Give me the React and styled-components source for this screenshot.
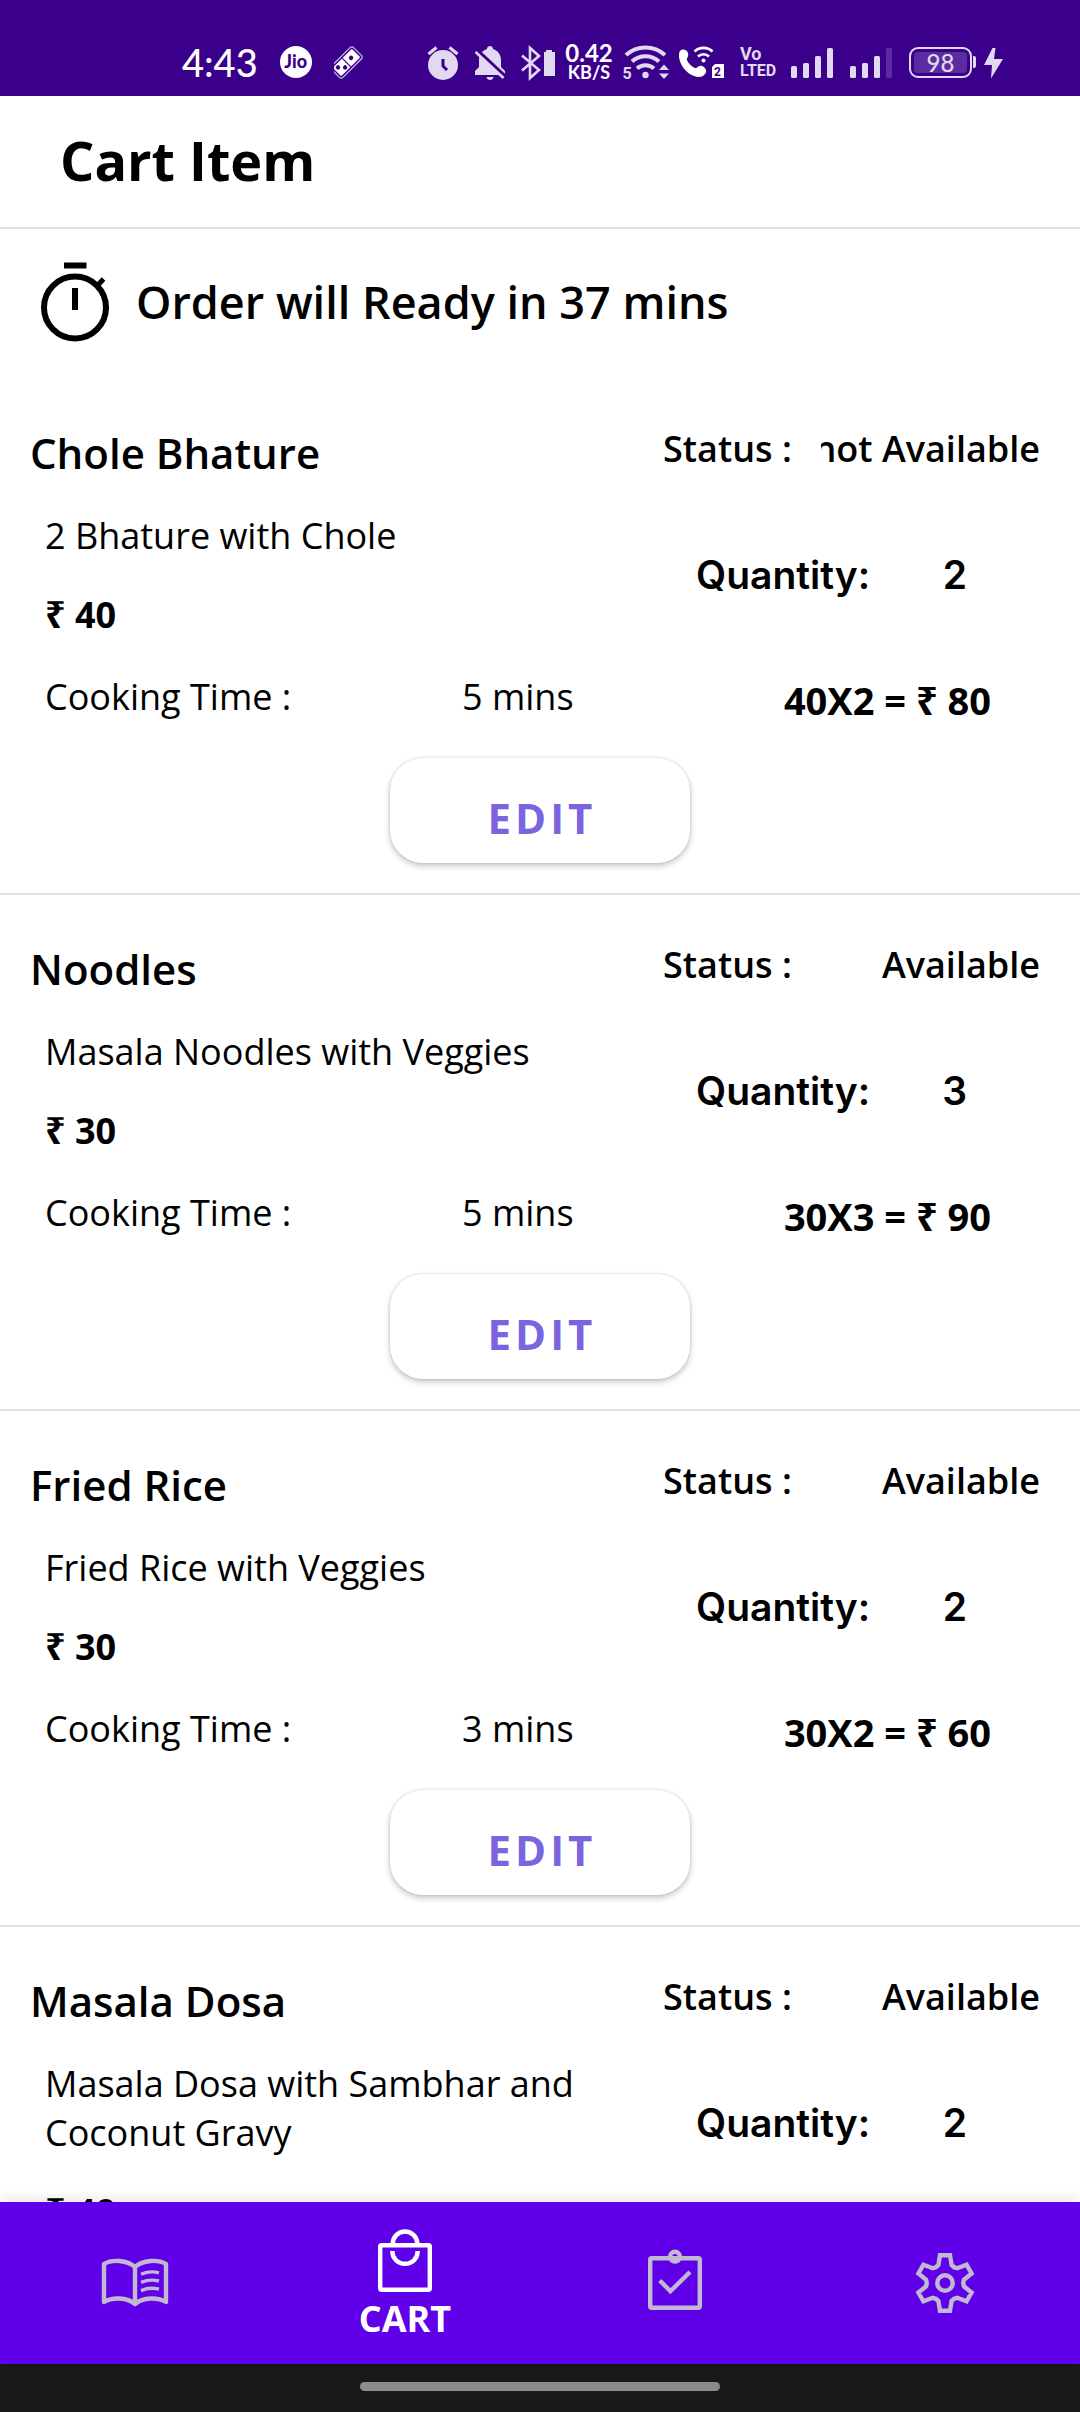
import React from "react";
import styled, { createGlobalStyle } from "styled-components";

const GlobalStyle = createGlobalStyle`
  * { box-sizing: border-box; }
  body {
    margin: 0;
    background: #ffffff;
    color: #000000;
    font-family: "Open Sans", "Noto Sans", sans-serif;
  }
  h1, h2, p { margin: 0; }
`;

const Screen = styled.div`
  display: flex;
  flex-direction: column;
  height: 100vh;
  overflow: hidden;
`;

/* ---------- system status bar ---------- */

const StatusBar = styled.div`
  display: flex;
  flex: none;
  justify-content: space-between;
  padding: 40px 77px 12px 182px;
  background: #3b008b;
  color: #ffffff;
`;

const StatusGroup = styled.div`
  display: flex;
  align-items: center;
  height: 44px;
  gap: ${(p) => p.$gap}px;
`;

const Clock = styled.time`
  font: 500 38px/44px Lato, sans-serif;
`;

const Carrier = styled.span`
  width: 32px;
  height: 32px;
  border-radius: 50%;
  background: #ffffff;
  color: #3b008b;
  font: 900 18px/31px Lato, sans-serif;
  text-align: center;
`;

const StatusSvg = styled.svg`
  display: block;
  flex: none;
  color: #e2d9f0;
`;

const Speed = styled.span`
  display: flex;
  flex-direction: column;
  align-items: center;
  width: 50px;
  font: 700 24px/20px Lato, sans-serif;
`;

const SpeedUnit = styled.span`
  font-size: 18px;
  line-height: 18px;
`;

const Volte = styled.span`
  display: flex;
  flex-direction: column;
  width: 35px;
  color: #e2d9f0;
  font: 700 18px/17px Roboto, sans-serif;
`;

const VolteBand = styled.span`
  font-size: 16px;
`;

const Battery = styled.span`
  display: flex;
  align-items: center;
  width: 67px;

  &::after {
    content: "";
    width: 3px;
    height: 12px;
    margin-left: 1px;
    border-radius: 0 2px 2px 0;
    background: #e2d9f0;
  }
`;

const BatteryLevel = styled.span`
  flex: 1;
  height: 31px;
  border: 2px solid #e2d9f0;
  border-radius: 9px;
  background: #5a2c9f;
  box-shadow: inset 0 0 0 3px #3b008b;
  color: #e2d9f0;
  font: 500 24px/27px Lato, sans-serif;
  text-align: center;
`;

/* ---------- page ---------- */

const Header = styled.header`
  flex: none;
  padding: 27px 60px 30px;
  border-bottom: 2px solid #e2e2e2;
`;

const Title = styled.h1`
  font-size: 54px;
  line-height: 74px;
  font-weight: 700;
`;

const Content = styled.main`
  flex: 1;
  min-height: 0;
  overflow: hidden;
`;

const ReadyBanner = styled.section`
  display: flex;
  align-items: center;
  gap: 26px;
  padding: 32px 40px 34px;
`;

const ReadyText = styled.p`
  padding-bottom: 4px;
  font-size: 45px;
  line-height: 61px;
  font-weight: 600;
`;

const CartRow = styled.article`
  display: grid;
  grid-template-columns: 1fr 377px;
  padding: 45px 40px 30px 30px;
  border-bottom: 2px solid #e2e2e2;
  font-size: 36px;
  line-height: 49px;
`;

const DishName = styled.h2`
  font-size: 42px;
  line-height: 58px;
  font-weight: 600;
`;

const DishInfo = styled.div`
  display: flex;
  flex-direction: column;
  gap: 30px;
  padding: 29px 20px 0 15px;
`;

const Price = styled.p`
  font-weight: 700;
`;

const CookingTime = styled.div`
  display: grid;
  grid-template-columns: 417px auto;
  padding-top: 3px;
`;

const OrderInfo = styled.div`
  display: flex;
  flex-direction: column;
  gap: 77px;
`;

const StatusLine = styled.div`
  display: flex;
  justify-content: space-between;
  font-weight: 600;
  white-space: nowrap;
`;

const StatusValue = styled.span`
  display: flex;
  justify-content: flex-end;
  width: 219px;
  overflow: hidden;
`;

const QuantityLine = styled.div`
  display: flex;
  justify-content: space-between;
  padding: 0 73px 0 33px;
  font-family: Inter, sans-serif;
  font-size: 39px;
  font-weight: 600;
`;

const Total = styled.p`
  padding-right: 49px;
  font-size: 38px;
  font-weight: 700;
  text-align: right;
`;

const EditButton = styled.button`
  grid-column: 1 / -1;
  justify-self: center;
  width: 300px;
  height: 105px;
  margin: 33px 0 0 10px;
  padding: 14px 0 0 4px;
  border: 0;
  border-radius: 33px;
  background: #ffffff;
  box-shadow: 0 3px 6px rgba(0, 0, 0, 0.22), 0 0 3px rgba(0, 0, 0, 0.14);
  color: #7b64e0;
  font: 700 42px/58px "Open Sans", sans-serif;
  letter-spacing: 4px;
`;

/* ---------- bottom navigation ---------- */

const BottomNav = styled.nav`
  position: relative;
  display: flex;
  flex: none;
  background: #6000e9;
  box-shadow: 0 0 14px rgba(0, 0, 0, 0.14);
`;

const NavLink = styled.a`
  display: flex;
  flex: 1;
  flex-direction: column;
  align-items: center;
  justify-content: center;
  height: 162px;
  color: ${(p) => (p.$active ? "#ffffff" : "#c2b8d2")};
  font-size: 36px;
  line-height: 50px;
  font-weight: 700;
  text-decoration: none;
`;

const NavSvg = styled.svg`
  display: block;
  width: 72px;
  height: 72px;
  fill: none;
  stroke: currentColor;
  stroke-width: 4.4;
`;

const GestureBar = styled.div`
  display: flex;
  flex: none;
  justify-content: center;
  padding: 18px 0 21px;
  background: #191919;
`;

const GesturePill = styled.span`
  width: 33.333%;
  height: 9px;
  border-radius: 5px;
  background: #8b8b8b;
`;

/* ---------- drawings ---------- */

const TicketIcon = () => (
  <StatusSvg width="30" height="44" viewBox="335 40 30 44">
    <g transform="rotate(-45 347.5 62.5)">
      <rect x="332" y="54.500" width="31" height="16" rx="2.500" fill="none" stroke="#cdbdf0" strokeWidth="1.200" />
      <rect x="334" y="56.500" width="27" height="12" rx="1" fill="#fff" />
      <path d="M347.500 56v13" stroke="#3b008b" strokeWidth="1.200" />
      <g fill="#3b008b">
        <circle cx="338" cy="60" r="2.200" />
        <circle cx="343" cy="65" r="2.200" />
        <circle cx="354" cy="62.500" r="2.200" />
      </g>
    </g>
  </StatusSvg>
);

const AlarmIcon = () => (
  <StatusSvg width="32" height="44" viewBox="426 40 32 44">
    <circle cx="442" cy="65" r="15" fill="currentColor" />
    <path d="M442 59v7l4 4" fill="none" stroke="#3b008b" strokeWidth="3" />
    <path d="M427.500 54l8-6.500M456.500 54l-8-6.500" stroke="currentColor" strokeWidth="3.200" />
  </StatusSvg>
);

const MutedBellIcon = () => (
  <StatusSvg width="30" height="44" viewBox="475 40 30 44">
    <path d="M475 75v-4l4-4v-7c0-5 3-9.500 8-11 0-4 6-4 6 0 5 1.500 8 6 8 11v7l4 4v4z" fill="currentColor" />
    <path d="M486.500 77h7c-.5 4-6.500 4-7 0z" fill="currentColor" />
    <path d="M476 49.500l30 28" stroke="#3b008b" strokeWidth="4" />
    <path d="M475.500 52l28 26" stroke="currentColor" strokeWidth="2.600" />
  </StatusSvg>
);

const BluetoothIcon = () => (
  <StatusSvg width="35" height="44" viewBox="521 40 35 44">
    <path d="M522 55.500l17 14.500-9 8V48l9 8-17 14.500" fill="none" stroke="currentColor" strokeWidth="2.600" />
    <path d="M546 50h6v2h3v24h-11V52h2z" fill="currentColor" />
  </StatusSvg>
);

const WifiIcon = () => (
  <StatusSvg width="48" height="44" viewBox="621 40 48 44" overflow="visible">
    <g fill="none" stroke="currentColor" strokeWidth="4">
      <path d="M625 55a29 29 0 0 1 39 0" />
      <path d="M631 61.500a20 20 0 0 1 27 0" />
      <path d="M636 68.500a13 13 0 0 1 17 0" />
    </g>
    <circle cx="644.500" cy="75" r="3.200" fill="currentColor" />
    <path d="M658 70l5-5.500 5 5.500zM658 73.500l5 5.500 5-5.500z" fill="currentColor" />
    <text x="621.500" y="79" fontFamily="Roboto, sans-serif" fontWeight="700" fontSize="16" fill="currentColor">5</text>
  </StatusSvg>
);

const WifiCallIcon = () => (
  <StatusSvg width="46" height="44" viewBox="679 40 46 44">
    <path
      d="M681 51c3-3 7-1 8 2 1 4-2 5-1 7 1 3 5 7 8 8 2 1 3-3 7-2 3 1 6 5 3 8-2 3-6 4-11 2-8-3-14-11-15-19 0-2 0-5 1-6z"
      fill="#fff"
    />
    <g fill="none" stroke="#fff" strokeWidth="2.600">
      <path d="M695.500 51.500a13 13 0 0 1 18 0" />
      <path d="M699 56.500a8 8 0 0 1 11 0" />
    </g>
    <circle cx="704.500" cy="60.500" r="2" fill="#fff" />
    <path d="M716 64h9v14h-12v-11z" fill="#fff" />
    <text x="715" y="76" fontFamily="Roboto, sans-serif" fontWeight="700" fontSize="12" fill="#3b008b">2</text>
  </StatusSvg>
);

const SignalIcon = ({ level }) => (
  <StatusSvg width="43" height="44" viewBox="0 0 43 44">
    {[12, 15, 22, 30].map((h, i) => (
      <rect key={h} x={i * 12} y={38 - h} width="6" height={h} rx="1.500" fill="currentColor" opacity={i < level ? 1 : 0.2} />
    ))}
  </StatusSvg>
);

const BoltIcon = () => (
  <StatusSvg width="19" height="44" viewBox="984 40 19 44">
    <path d="M992.500 48l-8.500 17h8l-1 13.500 12-19.500h-9l1.500-11z" fill="currentColor" />
  </StatusSvg>
);

const StopwatchIcon = () => (
  <svg width="70" height="84" viewBox="40 261 70 84" fill="none" stroke="#000">
    <circle cx="75" cy="307.500" r="31" strokeWidth="6" />
    <path d="M64 265.500h22.500M75 288v22" strokeWidth="6" />
    <path d="M97 286l6.500-7" strokeWidth="5" />
  </svg>
);

const BookIcon = () => (
  <NavSvg viewBox="99 2247 72 72">
    <path
      d="M135 2267c-8-7-23-8-31-3v38c8-5 23-5 31 2 8-7 23-7 31-2v-38c-8-5-23-4-31 3v37"
      strokeLinejoin="round"
    />
    <g strokeWidth="3.400">
      <path d="M141 2274.200c6-2.500 12-3 18-1.400" />
      <path d="M141 2282.400c6-2.500 12-3 18-1.400" />
      <path d="M141 2290.600c6-2.500 12-3 18-1.400" />
    </g>
  </NavSvg>
);

const BagIcon = () => (
  <NavSvg viewBox="369 2222 72 72">
    <rect x="380.200" y="2245.200" width="49.600" height="44.600" rx="1.500" />
    <path d="M392.700 2245v-1.200a12.300 12.300 0 0 1 24.600 0v1.200" />
    <path d="M392.300 2251c0 7 5 12.800 12.700 12.800s12.700-5.800 12.700-12.800" />
  </NavSvg>
);

const ClipboardIcon = () => (
  <NavSvg viewBox="639 2247 72 72">
    <rect x="650.200" y="2258.200" width="49.600" height="49.600" rx="1.500" />
    <circle cx="675" cy="2256.700" r="4.900" />
    <path d="M659.800 2280.500l10.600 10.700 19.600-19.200" />
  </NavSvg>
);

const toothPath = [[-6.6, -18], [-5, -27.8], [5, -27.8], [6.6, -18]];

const gearPoints = Array.from({ length: 6 }, (_, i) => {
  const a = (i * Math.PI) / 3;
  return [...toothPath, [9.1, -15.8]].map(
    ([x, y]) => `${x * Math.cos(a) - y * Math.sin(a)},${x * Math.sin(a) + y * Math.cos(a)}`
  );
})
  .flat()
  .join(" ");

const GearIcon = () => (
  <NavSvg viewBox="-36 -36 72 72">
    <polygon points={gearPoints} />
    <circle r="7.700" />
  </NavSvg>
);

/* ---------- data and app ---------- */

const items = [
  { name: "Chole Bhature", description: "2 Bhature with Chole", price: 40, minutes: 5, quantity: 2, status: "not Available" },
  { name: "Noodles", description: "Masala Noodles with Veggies", price: 30, minutes: 5, quantity: 3, status: "Available" },
  { name: "Fried Rice", description: "Fried Rice with Veggies", price: 30, minutes: 3, quantity: 2, status: "Available" },
  { name: "Masala Dosa", description: "Masala Dosa with Sambhar and Coconut Gravy", price: 40, minutes: 8, quantity: 2, status: "Available" },
];

const CartItem = ({ item }) => (
  <CartRow>
    <div>
      <DishName>{item.name}</DishName>
      <DishInfo>
        <p>{item.description}</p>
        <Price>₹ {item.price}</Price>
        <CookingTime>
          <span>Cooking Time :</span>
          <span>{item.minutes} mins</span>
        </CookingTime>
      </DishInfo>
    </div>
    <OrderInfo>
      <StatusLine>
        <span>Status :</span>
        <StatusValue>
          <span>{item.status}</span>
        </StatusValue>
      </StatusLine>
      <QuantityLine>
        <span>Quantity:</span>
        <span>{item.quantity}</span>
      </QuantityLine>
      <Total>
        {item.price}X{item.quantity} = ₹ {item.price * item.quantity}
      </Total>
    </OrderInfo>
    <EditButton type="button">EDIT</EditButton>
  </CartRow>
);

export default function App() {
  return (
    <Screen>
      <GlobalStyle />
      <StatusBar>
        <StatusGroup $gap={22}>
          <Clock>4:43</Clock>
          <Carrier>Jio</Carrier>
          <TicketIcon />
        </StatusGroup>
        <StatusGroup $gap={16}>
          <AlarmIcon />
          <MutedBellIcon />
          <StatusGroup $gap={8}>
            <BluetoothIcon />
            <Speed>
              <span>0.42</span>
              <SpeedUnit>KB/S</SpeedUnit>
            </Speed>
            <WifiIcon />
            <WifiCallIcon />
          </StatusGroup>
          <Volte>
            <span>Vo</span>
            <VolteBand>LTED</VolteBand>
          </Volte>
          <SignalIcon level={4} />
          <SignalIcon level={3} />
          <StatusGroup $gap={8}>
            <Battery>
              <BatteryLevel>98</BatteryLevel>
            </Battery>
            <BoltIcon />
          </StatusGroup>
        </StatusGroup>
      </StatusBar>

      <Header>
        <Title>Cart Item</Title>
      </Header>

      <Content>
        <ReadyBanner>
          <StopwatchIcon />
          <ReadyText>Order will Ready in 37 mins</ReadyText>
        </ReadyBanner>
        {items.map((item) => (
          <CartItem key={item.name} item={item} />
        ))}
      </Content>

      <BottomNav>
        <NavLink href="#menu" aria-label="Menu">
          <BookIcon />
        </NavLink>
        <NavLink href="#cart" $active aria-current="page">
          <BagIcon />
          <span>CART</span>
        </NavLink>
        <NavLink href="#orders" aria-label="Orders">
          <ClipboardIcon />
        </NavLink>
        <NavLink href="#settings" aria-label="Settings">
          <GearIcon />
        </NavLink>
      </BottomNav>
      <GestureBar>
        <GesturePill />
      </GestureBar>
    </Screen>
  );
}
